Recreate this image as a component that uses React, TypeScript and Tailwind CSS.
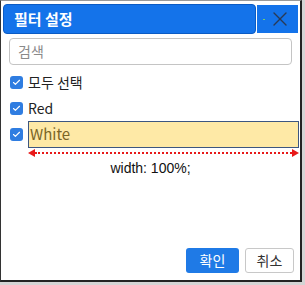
import { Check, X } from 'lucide-react'

const options = [
  { id: 'all', label: '모두 선택' },
  { id: 'red', label: 'Red' },
]

function Box() {
  return (
    <span className="flex h-[13px] w-[13px] shrink-0 items-center justify-center rounded-[3px] bg-[#2f7de1]">
      <Check className="h-[9px] w-[9px] text-white" strokeWidth={3} />
    </span>
  )
}

export default function App() {
  return (
    <div
      className="h-[285px] w-[305px] bg-[#d4d4d4]"
      style={{ fontFamily: '"Noto Sans CJK KR", "Noto Sans", "Liberation Sans", sans-serif' }}
    >
      <div className="flex h-[282px] w-[302px] flex-col border-t border-l border-r-2 border-b-2 border-t-[#9a9a9a] border-l-[#333] border-r-[#222] border-b-[#222] bg-white">
        <div className="mt-[3px] flex h-[30px] items-stretch pl-[2px] pr-[2px]">
          <div className="flex w-[253px] items-center rounded-[4px] border border-[#0b5bc4] bg-[#1473ea] pl-[10px] text-[15px] font-bold text-white">
            필터 설정
          </div>
          <div className="my-[1px] ml-[1px] flex flex-1 items-center justify-end gap-[3px] bg-[#1473ea] pr-[6px]">
            <span className="h-px w-[2px] bg-[#6fcf6f]" />
            <X className="h-[24px] w-[24px] text-[#2a3a55]" strokeWidth={1.4} />
          </div>
        </div>

        <div className="mx-[8px] mt-[4px] flex h-[27px] items-center rounded-[4px] border border-[#c4c4c4] px-[8px] text-[14px] text-[#8a8a8a]">
          검색
        </div>

        <div className="mt-[4px] flex flex-col pl-[9px]">
          {options.map((option) => (
            <div key={option.id} className="flex h-[26px] items-center gap-[5px]">
              <Box />
              <span className="text-[14px] text-[#222]">{option.label}</span>
            </div>
          ))}
          <div className="flex h-[27px] items-center gap-[5px]">
            <Box />
            <div className="flex h-[27px] w-[271px] items-center border border-[#3d5680] bg-[#fee9a6] pl-[1px] text-[15px] text-[#7a6526]">
              White
            </div>
          </div>
          <div className="ml-[18px] mt-[1px] flex w-[271px] items-center">
            <span className="h-0 w-0 border-y-[4px] border-r-[7px] border-y-transparent border-r-[#e81919]" />
            <span className="flex-1 border-t-2 border-dotted border-[#e81919]" />
            <span className="h-0 w-0 border-y-[4px] border-l-[7px] border-y-transparent border-l-[#e81919]" />
          </div>
          <p className="mt-[1px] pr-[9px] text-center text-[14px] text-[#111]" style={{ fontFamily: '"Liberation Sans", sans-serif' }}>
            width: 100%;
          </p>
        </div>

        <div className="mt-auto mb-[7px] flex justify-end gap-[6px] pr-[6px]">
          <button type="button" className="h-[25px] w-[53px] rounded-[3px] bg-[#1f7ae6] text-[14px] text-white">
            확인
          </button>
          <button type="button" className="h-[25px] w-[49px] rounded-[3px] border border-[#c8c8c8] bg-white text-[14px] text-[#333]">
            취소
          </button>
        </div>
      </div>
    </div>
  )
}
